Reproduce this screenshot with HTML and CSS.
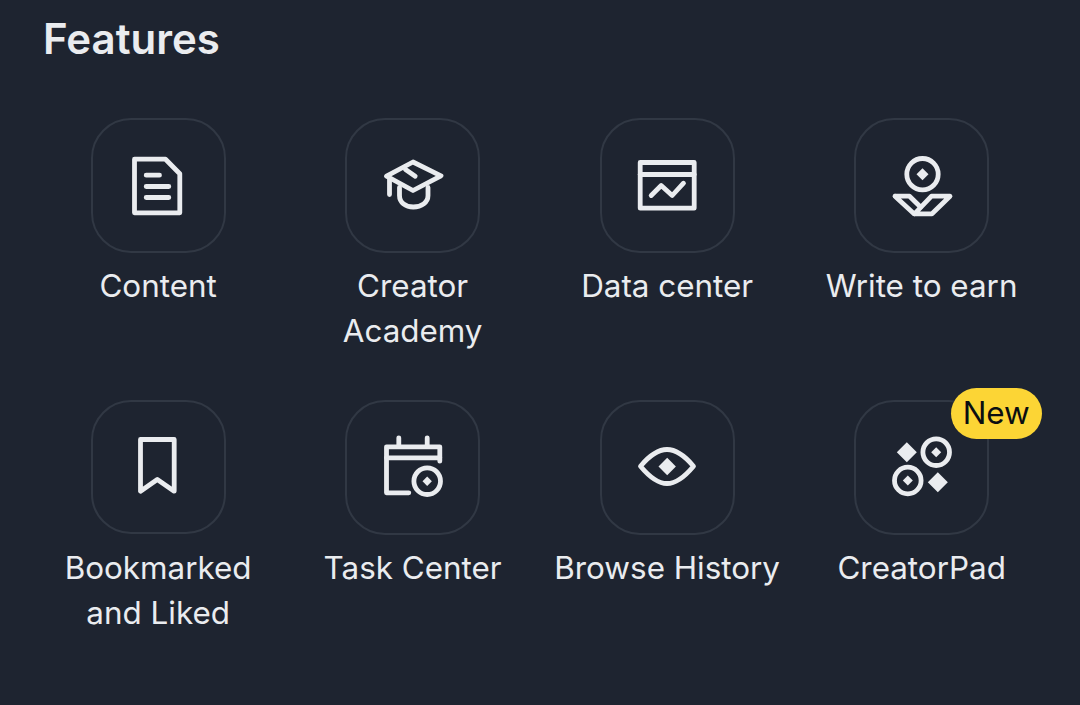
FILE: index.html
```html
<!DOCTYPE html>
<html lang="en">
<head>
  <meta charset="UTF-8">
  <meta name="viewport" content="width=device-width, initial-scale=1.0">
  <title>Features</title>
  <link rel="stylesheet" href="styles.css">
</head>
<body>
  <h1 class="title">Features</h1>

  <div class="grid">
    <div class="item">
      <div class="tile">
        <svg class="icon" viewBox="33.5 33.5 68 68">
          <path d="M44 40.7H75L89.3 55.3V94.3H44V40.7Z"/>
          <path d="M55.7 56.7H69M55.7 68H78.3M55.7 79H78.3"/>
        </svg>
      </div>
      <div class="label">Content</div>
    </div>

    <div class="item">
      <div class="tile">
        <svg class="icon" viewBox="33.5 33.5 68 68">
          <path d="M67.5 44.5L95.5 58.3L67.5 73L41 58.7Z"/>
          <path d="M60 52L69.7 58.7M44 62V77"/>
          <path d="M54 70V78C54 85 60 89.5 67.8 89.5C76 89.5 82.5 85 82.5 78V70"/>
        </svg>
      </div>
      <div class="label">Creator Academy</div>
    </div>

    <div class="item">
      <div class="tile">
        <svg class="icon" viewBox="33.5 33.5 68 68">
          <path d="M40.7 44H94.7V89.7H40.7Z"/>
          <path d="M40.7 56H94.7"/>
          <path d="M51.7 77L61.7 67L72.7 77L84 64.7"/>
        </svg>
      </div>
      <div class="label">Data center</div>
    </div>

    <div class="item">
      <div class="tile">
        <svg class="icon" viewBox="33.5 33.5 68 68">
          <circle cx="68" cy="55.7" r="15.7"/>
          <path class="solid" d="M68 49.7L74 55.7L68 61.7L62 55.7Z"/>
          <path d="M40.5 77.7H55L66 88.5M40.5 77.7L59.5 95.3"/>
          <path d="M95.5 77.7H77L60 95.3H77.5Z"/>
        </svg>
      </div>
      <div class="label">Write to earn</div>
    </div>

    <div class="item">
      <div class="tile">
        <svg class="icon" viewBox="33.5 33.5 68 68">
          <path d="M50 40H83.7V91.7L66.8 80L50 91.7Z"/>
        </svg>
      </div>
      <div class="label">Bookmarked and Liked</div>
    </div>

    <div class="item">
      <div class="tile">
        <svg class="icon" viewBox="33.5 33.5 68 68">
          <path d="M63.3 93.3H41V47.3H94.3V61.7"/>
          <path d="M41 58.3H94.3M53.3 38.3V47M81.7 38.3V47"/>
          <circle cx="81.7" cy="81.7" r="13.3"/>
          <path class="solid" d="M81.7 77L86.4 81.7L81.7 86.4L77 81.7Z"/>
        </svg>
      </div>
      <div class="label">Task Center</div>
    </div>

    <div class="item">
      <div class="tile">
        <svg class="icon" viewBox="33.5 33.5 68 68">
          <path d="M41 66.7C50 56 58 50 67.5 50C77 50 85 56 94 66.7C85 77.5 77 84 67.5 84C58 84 50 77.5 41 66.7Z"/>
          <path class="solid" d="M67.7 58.3L76.4 67L67.7 75.7L59 67Z"/>
        </svg>
      </div>
      <div class="label">Browse History</div>
    </div>

    <div class="item">
      <div class="tile">
        <svg class="icon" viewBox="33.5 33.5 68 68">
          <path class="solid" d="M52.3 42.7L62.3 52.7L52.3 62.7L42.3 52.7Z"/>
          <circle cx="81.7" cy="52.7" r="13.3"/>
          <path class="solid" d="M81.7 47.7L86.7 52.7L81.7 57.7L76.7 52.7Z"/>
          <circle cx="53.3" cy="81" r="13.3"/>
          <path class="solid" d="M53.3 76L58.3 81L53.3 86L48.3 81Z"/>
          <path class="solid" d="M83.3 72.7L93.3 82.7L83.3 92.7L73.3 82.7Z"/>
        </svg>
        <span class="badge">New</span>
      </div>
      <div class="label">CreatorPad</div>
    </div>
  </div>
</body>
</html>
```

FILE: styles.css
```css
* {
  box-sizing: border-box;
}
body {
  margin: 0;
  background-color: #1e2430;
  color: #eaecef;
  font-family: Inter, "Open Sans", sans-serif;
}
.title {
  margin: 0;
  padding: 12px 0 0 43px;
  height: 118px;
  font-size: 42px;
  line-height: 54px;
  font-weight: 600;
}
.grid {
  display: grid;
  grid-template-columns: repeat(4, 254.5px);
  grid-auto-rows: 236px;
  row-gap: 45.5px;
  padding-left: 30.9px;
}
.item {
  display: flex;
  flex-direction: column;
  align-items: center;
}
.tile {
  position: relative;
  display: flex;
  align-items: center;
  justify-content: center;
  width: 135px;
  height: 135px;
  border: 2px solid #313844;
  border-radius: 40px;
}
.icon {
  width: 68px;
  height: 68px;
  fill: none;
  stroke: #eaecef;
  stroke-width: 4.8;
  stroke-linecap: round;
  stroke-linejoin: round;
}
.icon .solid {
  fill: #eaecef;
  stroke: none;
}
.label {
  margin-top: 11.1px;
  width: 236px;
  font-size: 31.4px;
  line-height: 45px;
  text-align: center;
}
.badge {
  position: absolute;
  top: -14px;
  right: -54.6px;
  width: 91px;
  height: 51px;
  border-radius: 26px;
  background-color: #fcd535;
  color: #0b0e11;
  font-size: 31.4px;
  line-height: 51px;
  text-align: center;
}
```
